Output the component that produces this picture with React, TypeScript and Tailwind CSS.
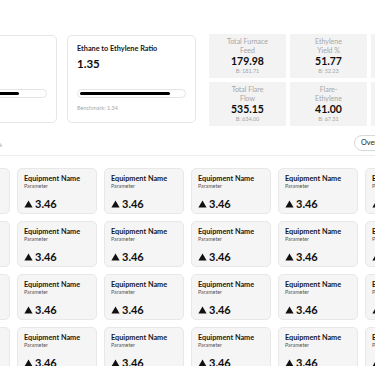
const tiles = [
  { label: ["Total Furnace", "Feed"], value: "179.98", bench: "B: 181.71" },
  { label: ["Ethylene", "Yield %"], value: "51.77", bench: "B: 52.23" },
  { label: ["Propylene", "Yield %"], value: "16.02", bench: "B: 15.80" },
  { label: ["Total Flare", "Flow"], value: "535.15", bench: "B: 634.00" },
  { label: ["Flare-", "Ethylene"], value: "41.00", bench: "B: 67.31" },
  { label: ["Flare-", "Propylene"], value: "12.40", bench: "B: 10.22" },
];

const RatioCard = ({ title, value, bench, fill }: { title: string; value: string; bench: string; fill: string }) => (
  <div className="w-[129px] h-[88px] mt-px shrink-0 rounded-[5px] border border-[#e6e6e6] bg-white pl-[9px] pr-[9px] pt-[8px]">
    <div className="text-[7.3px] leading-[10px] font-bold text-[#161616] whitespace-nowrap">{title}</div>
    <div className="mt-[3px] text-[11.5px] leading-[13px] font-bold text-[#0d0d0d]">{value}</div>
    <div className="mt-[19px] h-[9px] rounded-full border border-[#e4e4e4] bg-white px-[2px] py-[2px]">
      <div className={`h-full rounded-full bg-black ${fill}`} />
    </div>
    <div className="mt-[7px] text-[5.5px] leading-[7px] text-[#a8a8a8] whitespace-nowrap">{bench}</div>
  </div>
);

const EquipmentCard = () => (
  <div className="w-[80px] h-[46px] shrink-0 rounded-[5px] border border-[#e8e8e8] bg-[#f5f5f5] pl-[6px] pt-[5px]">
    <div className="text-[7.3px] leading-[9px] font-bold text-[#161616] whitespace-nowrap">Equipment Name</div>
    <div className="text-[5.3px] leading-[7px] text-[#555]">Parameter</div>
    <div className="mt-[7px] flex items-center gap-[2px]">
      <svg width="9" height="8" viewBox="0 0 9 8" className="mt-px">
        <path d="M4.5 0.5 L8.6 7.6 L0.4 7.6 Z" fill="#111" />
      </svg>
      <span className="text-[11px] leading-[13px] font-bold text-[#0d0d0d]">3.46</span>
    </div>
  </div>
);

export default function App() {
  return (
    <div className="w-[375px] h-[366px] overflow-hidden bg-white font-['Lato',sans-serif]">
      <div className="pt-[34px] flex items-start ml-[-72px]">
        <RatioCard title="C3 Ratio" value="0.8" bench="B: 0.8" fill="w-[76%]" />
        <div className="ml-[10px]">
          <RatioCard title="Ethane to Ethylene Ratio" value="1.35" bench="Benchmark: 1.34" fill="w-[87%]" />
        </div>
        <div className="ml-[13px] grid grid-cols-[repeat(3,77px)] gap-[4px] shrink-0">
          {tiles.map((t) => (
            <div key={t.value} className="h-[44px] bg-[#f3f3f3] flex flex-col items-center justify-center text-center">
              <div className="text-[7px] leading-[9px] text-[#a6a6a6] whitespace-nowrap">
                {t.label[0]}
                <br />
                {t.label[1]}
              </div>
              <div className="text-[10.5px] leading-[12px] font-bold text-[#0d0d0d]">{t.value}</div>
              <div className="text-[5.5px] leading-[8px] text-[#a6a6a6]">{t.bench}</div>
            </div>
          ))}
        </div>
      </div>
      <div className="mt-[9px] h-[16px] flex items-center justify-between">
        <span className="ml-[-25px] mt-[5px] text-[5.5px] text-[#a8a8a8]">Benchmark</span>
        <span className="mr-[-24px] h-[16px] pl-[6px] pr-[6px] rounded-full border border-[#d8d8d8] text-[7.3px] leading-[14px] text-[#222]">
          Overview
        </span>
      </div>
      <div className="mt-[4px] h-px bg-[#ececec]" />
      <div className="mt-[12px] ml-[-70px] flex flex-col gap-[7px]">
        {[0, 1, 2, 3].map((r) => (
          <div key={r} className="flex gap-[7px]">
            {[0, 1, 2, 3, 4, 5].map((c) => (
              <EquipmentCard key={c} />
            ))}
          </div>
        ))}
      </div>
    </div>
  );
}
